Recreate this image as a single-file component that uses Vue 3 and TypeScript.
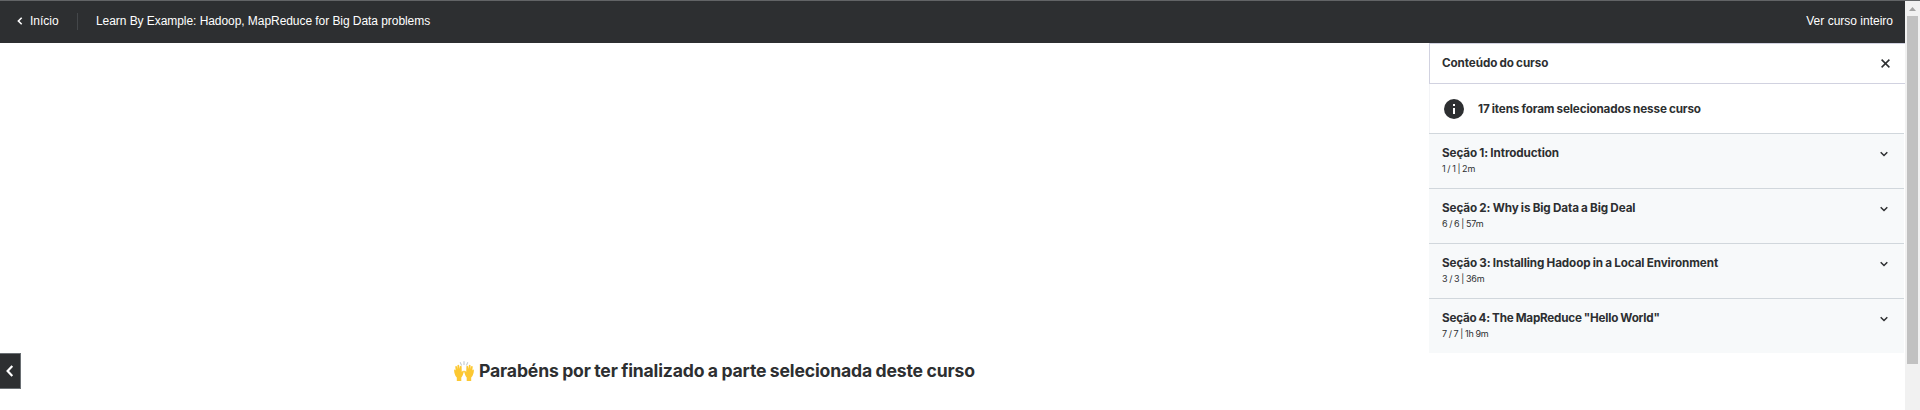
<script setup lang="ts">
interface Section {
  title: string
  meta: string
  cls: string
}

const sections: Section[] = [
  { title: 'Seção 1: Introduction', meta: '1 / 1 | 2m', cls: 's1' },
  { title: 'Seção 2: Why is Big Data a Big Deal', meta: '6 / 6 | 57m', cls: 's2' },
  { title: 'Seção 3: Installing Hadoop in a Local Environment', meta: '3 / 3 | 36m', cls: 's3' },
  { title: 'Seção 4: The MapReduce "Hello World"', meta: '7 / 7 | 1h 9m', cls: 's4' },
]
</script>

<template>
  <div class="window">
    <div class="page">
      <header class="topbar">
        <a class="home">
          <svg class="home-icon" viewBox="0 0 6 8"><path d="M4.7 .8 1.4 4l3.3 3.2" /></svg>
          <span class="home-label">Início</span>
        </a>
        <span class="divider"></span>
        <span class="course">Learn By Example: Hadoop, MapReduce for Big Data problems</span>
        <a class="full">Ver curso inteiro</a>
      </header>
      <div class="body">
        <main class="stage">
          <button class="prev" aria-label="Anterior">
            <svg viewBox="0 0 8 12"><path d="M6.3 1 1.6 6l4.7 5" /></svg>
          </button>
          <h1 class="congrats">
            <svg class="hands" viewBox="0 0 20 20">
              <path d="M10 .6v3M6.4 1.6l1 2.5M13.6 1.6l-1 2.5" stroke="#b9c3ca" stroke-linecap="round" />
              <g fill="#fcc832">
                <path d="M2.800 20v-3.600C.8 14.700.2 11.800.1 9.300c-.1-1 1.200-1.100 1.400-.2l.3.900-.5-4.100c-.1-1 1.400-1.300 1.700-.2l.6 2.600-.2-3.600c0-1.100 1.600-1.200 1.800-.1l.5 3.500.3-2.600c.1-1 1.600-.9 1.600.1l.2 5.400.8-1c.7-.7 1.600-.1 1.300.8-.8 2.600-1.500 4.600-2.600 5.700V20z" />
                <path d="M17.200 20v-3.600c2-1.700 2.600-4.600 2.700-7.100.1-1-1.200-1.100-1.400-.2l-.3.900.5-4.100c.1-1-1.400-1.300-1.700-.2l-.6 2.600.2-3.600c0-1.100-1.600-1.200-1.800-.1l-.5 3.500-.3-2.600c-.1-1-1.600-.9-1.600.1l-.2 5.400-.8-1c-.7-.7-1.600-.1-1.300.8.8 2.600 1.500 4.600 2.600 5.700V20z" />
              </g>
            </svg>
            <span>Parabéns por ter finalizado a parte selecionada deste curso</span>
          </h1>
        </main>
        <aside class="sidebar">
          <div class="side-head">
            <span class="side-title">Conteúdo do curso</span>
            <svg class="close" viewBox="0 0 9 9"><path d="M.6 .6l7.8 7.800M8.400 .6.6 8.400" /></svg>
          </div>
          <div class="notice">
            <svg class="info" viewBox="0 0 20 20">
              <circle cx="10" cy="10" r="10" fill="#2d2f31" />
              <path d="M9 5h2v2H9zM9 9h2v6H9z" fill="#fff" />
            </svg>
            <span class="notice-text">17 itens foram selecionados nesse curso</span>
          </div>
          <section v-for="s in sections" :key="s.title" class="section" :class="s.cls">
            <div>
              <div class="section-title">{{ s.title }}</div>
              <div class="section-meta">{{ s.meta }}</div>
            </div>
            <svg class="chevron" viewBox="0 0 8 6"><path d="M.7 1.2 4 4.500l3.300-3.300" /></svg>
          </section>
        </aside>
      </div>
    </div>
    <div class="scrollbar">
      <svg class="arrow" viewBox="0 0 7 4"><path d="M0 4 3.5 0 7 4z" fill="#a3a3a3" /></svg>
      <div class="thumb"></div>
    </div>
  </div>
</template>

<style>
body {
  overflow: hidden;
}
</style>

<style scoped>
.window {
  box-sizing: border-box;
  display: flex;
  width: 1920px;
  height: 410px;
  border-top: 1px solid #626466;
  background: #fff;
  color: #2d2f31;
  font-family: Inter, "Liberation Sans", sans-serif;
  overflow: hidden;
}
.page {
  display: flex;
  flex-direction: column;
  width: 1905px;
}
.topbar {
  box-sizing: border-box;
  display: flex;
  align-items: center;
  height: 42px;
  padding: 0 12px 2px 17px;
  background: #2d2f31;
  color: #fff;
  font: 12px/18px "Liberation Sans", sans-serif;
  white-space: nowrap;
}
.home {
  display: flex;
  align-items: center;
  width: 60px;
}
.home-icon {
  width: 6px;
  height: 8px;
  margin-right: 7px;
}
.home-icon path,
.prev path,
.close path,
.chevron path {
  fill: none;
  stroke: #fff;
  stroke-width: 1.6;
}
.divider {
  width: 1px;
  height: 17px;
  margin-right: 18px;
  background: #44474a;
}
.course {
  flex: 1;
  letter-spacing: -0.06px;
}
.body {
  display: flex;
  flex: 1;
}
.stage {
  display: flex;
  align-items: flex-start;
  width: 1429px;
  padding-top: 310px;
  box-sizing: border-box;
}
.prev {
  box-sizing: border-box;
  display: flex;
  align-items: center;
  width: 21px;
  height: 36px;
  padding: 0 0 0 6px;
  border: 1px solid #6a6f73;
  border-left: 0;
  background: #2d2f31;
}
.prev svg {
  width: 8px;
  height: 12px;
}
.prev path {
  stroke-width: 2.2;
}
.congrats {
  display: flex;
  align-items: center;
  margin: 5px 0 0 433px;
  font: 700 17.6px/26px Inter, sans-serif;
  letter-spacing: -0.16px;
  word-spacing: -0.5px;
  white-space: nowrap;
}
.hands {
  width: 20px;
  height: 20px;
  margin-right: 5px;
}
.sidebar {
  width: 476px;
  font-weight: 700;
  font-size: 11.7px;
  letter-spacing: -0.1px;
  word-spacing: -0.4px;
  white-space: nowrap;
}
.side-head {
  box-sizing: border-box;
  display: flex;
  align-items: center;
  justify-content: space-between;
  height: 41px;
  padding: 0 15px 0 12px;
  border: 1px solid #d1d2e0;
  border-right: 0;
}
.side-title {
  padding-bottom: 1px;
}
.close {
  width: 9px;
  height: 9px;
}
.close path,
.chevron path {
  stroke: #2d2f31;
  stroke-width: 1.5;
}
.notice {
  box-sizing: border-box;
  display: flex;
  align-items: center;
  height: 49px;
  padding-left: 14px;
  border-left: 1px solid #f3f4f7;
}
.notice-text {
  letter-spacing: -0.14px;
}
.info {
  width: 20px;
  height: 20px;
  margin-right: 14px;
}
.section {
  box-sizing: border-box;
  display: flex;
  justify-content: space-between;
  height: 55px;
  margin-right: 1px;
  padding: 10px 16px 0 13px;
  border-top: 1px solid #d1d7dc;
  background: #f7f9fa;
}
.section-title {
  line-height: 18px;
}
.s4 .section-title {
  letter-spacing: -0.22px;
}
.section-meta {
  font: 9px/14px Inter, sans-serif;
  letter-spacing: -0.15px;
  word-spacing: -0.6px;
}
.chevron {
  width: 8px;
  height: 6px;
  margin-top: 7px;
}
.scrollbar {
  display: flex;
  flex-direction: column;
  align-items: center;
  width: 15px;
  background: #f1f1f1;
}
.arrow {
  width: 7px;
  height: 4px;
  margin: 6px 0 5px;
}
.thumb {
  width: 11px;
  height: 348px;
  background: #c1c1c1;
}
</style>
